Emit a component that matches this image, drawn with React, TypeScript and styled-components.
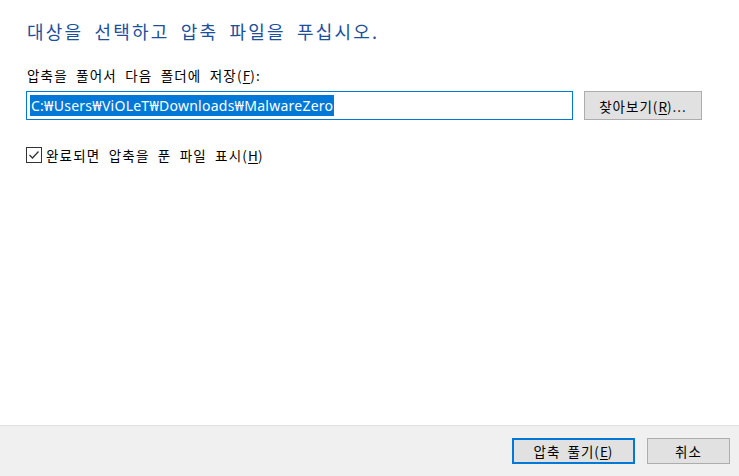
import React from 'react';
import styled, { createGlobalStyle } from 'styled-components';

const GlobalStyle = createGlobalStyle`
  html, body {
    margin: 0;
    padding: 0;
    background: #ffffff;
  }
  body {
    font-family: "Noto Sans CJK KR", "Noto Sans", sans-serif;
  }
`;

const Window = styled.div`
  width: 739px;
  height: 476px;
  display: flex;
  flex-direction: column;
  background: #ffffff;
  overflow: hidden;
`;

const Content = styled.div`
  flex: 1;
  display: flex;
  flex-direction: column;
  padding: 16px 36px 0 26px;
`;

const Title = styled.h1`
  margin: 0 0 0 1px;
  font-size: 18px;
  font-weight: 400;
  line-height: 30px;
  letter-spacing: 2.2px;
  word-spacing: 5px;
  color: #1c4f9c;
`;

const Label = styled.div`
  margin: 20px 0 0 1px;
  font-size: 13.5px;
  line-height: 18px;
  letter-spacing: 1.2px;
  word-spacing: 4px;
  color: #000000;
`;

const Accel = styled.span`
  text-decoration: underline;
  text-underline-offset: 2px;
  letter-spacing: 0;
`;

const PathRow = styled.div`
  display: flex;
  align-items: center;
  gap: 11px;
  margin-top: 7px;
`;

const PathInput = styled.div`
  width: 547px;
  height: 29px;
  box-sizing: border-box;
  border: 1px solid #0078d7;
  padding: 3px;
  display: flex;
  align-items: stretch;
`;

const Selected = styled.span`
  background: #0078d7;
  color: #ffffff;
  font-family: "Noto Sans", sans-serif;
  font-size: 14px;
  line-height: 21px;
  padding: 0 1px;
  letter-spacing: 0.25px;
`;

const Button = styled.button<{ $default?: boolean; $w: number; $h: number }>`
  width: ${({ $w }) => $w}px;
  height: ${({ $h }) => $h}px;
  box-sizing: border-box;
  background: #e1e1e1;
  border: ${({ $default }) => ($default ? '2px solid #0078d7' : '1px solid #adadad')};
  font-family: "Noto Sans CJK KR", "Noto Sans", sans-serif;
  font-size: 13.5px;
  letter-spacing: 1px;
  word-spacing: 3px;
  color: #000000;
  padding: 0;
  display: flex;
  align-items: center;
  justify-content: center;
`;

const CheckRow = styled.label`
  display: flex;
  align-items: center;
  gap: 4px;
  margin-top: 25px;
  font-size: 13.5px;
  letter-spacing: 1.2px;
  word-spacing: 4px;
  color: #000000;
`;

const Box = styled.span`
  width: 14px;
  height: 14px;
  border: 1px solid #333333;
  background: #ffffff;
  display: flex;
  align-items: center;
  justify-content: center;
`;

const Footer = styled.div`
  height: 51px;
  box-sizing: border-box;
  border-top: 1px solid #dfdfdf;
  background: #f0f0f0;
  display: flex;
  justify-content: flex-end;
  align-items: flex-start;
  gap: 12px;
  padding: 12px 9px 0 0;
`;

export default function App() {
  return (
    <>
      <GlobalStyle />
      <Window>
        <Content>
          <Title>대상을 선택하고 압축 파일을 푸십시오.</Title>
          <Label>
            압축을 풀어서 다음 폴더에 저장(<Accel>F</Accel>):
          </Label>
          <PathRow>
            <PathInput>
              <Selected>C:₩Users₩ViOLeT₩Downloads₩MalwareZero</Selected>
            </PathInput>
            <Button $w={118} $h={29}>
              찾아보기(<Accel>R</Accel>)...
            </Button>
          </PathRow>
          <CheckRow>
            <Box>
              <svg width="12" height="10" viewBox="0 0 12 10">
                <path d="M1.5 5 L4.5 8 L10.5 1.5" fill="none" stroke="#333333" strokeWidth="1.3" />
              </svg>
            </Box>
            <span>
              완료되면 압축을 푼 파일 표시(<Accel>H</Accel>)
            </span>
          </CheckRow>
        </Content>
        <Footer>
          <Button $default $w={123} $h={26}>
            압축 풀기(<Accel>E</Accel>)
          </Button>
          <Button $w={83} $h={26}>
            취소
          </Button>
        </Footer>
      </Window>
    </>
  );
}
